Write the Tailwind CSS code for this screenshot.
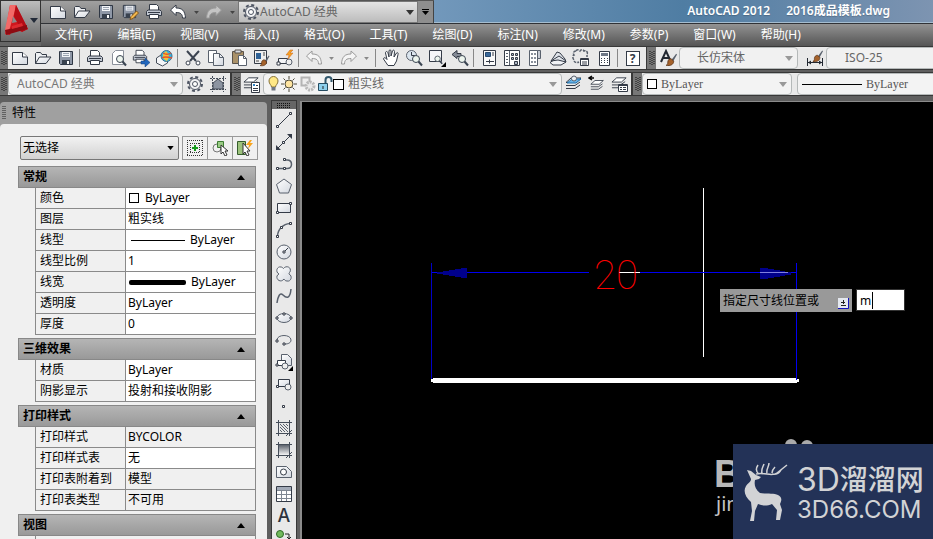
<!DOCTYPE html>
<html lang="zh-CN">
<head>
    <meta charset="UTF-8">
    <meta name="viewport" content="width=device-width, initial-scale=1.0">
    <title>AutoCAD 2012 - 2016成品模板.dwg</title>
    <script src="https://cdn.jsdelivr.net/npm/@tailwindcss/browser@4"></script>
</head>
<body class="h-screen overflow-hidden flex flex-col bg-[#5f5f5f] text-xs leading-4 text-black font-['Noto_Sans','Noto_Sans_CJK_SC',sans-serif]">

    <!-- Shared icons -->
    <svg class="absolute size-0">
        <defs>
            <linearGradient id="paper" x1="0" y1="0" x2="1" y2="1">
                <stop offset="0" stop-color="#fff"/><stop offset="1" stop-color="#d3d8e0"/>
            </linearGradient>
            <linearGradient id="shade" x1="0" y1="0" x2="0" y2="1">
                <stop offset="0" stop-color="#5d636d"/><stop offset="1" stop-color="#f4f4f4"/>
            </linearGradient>
        </defs>
        <symbol id="i-new" viewBox="0 0 18 18"><path d="M1.500 3.500h10l5 4.500v7.500h-15z" fill="url(#paper)" stroke="#343b47"/><path d="M11.500 3.500V8h5" fill="#fff" stroke="#343b47"/></symbol>
        <symbol id="i-open" viewBox="0 0 18 18"><path d="M1.500 14.500v-10l1-1h4l1.500 2h4.500v2.500" fill="#eef0f3" stroke="#343b47"/><path d="M1.500 14.500l4-6.500h11.500l-5 6.500z" fill="url(#paper)" stroke="#343b47"/></symbol>
        <symbol id="i-save" viewBox="0 0 18 18"><path d="M2.500 2.500h13v13h-12l-1-1z" fill="#8f98a7" stroke="#2f3744"/><path d="M5 3h8v5H5z" fill="#f3f5f8"/><path d="M6 4.500h6M6 6.500h6" stroke="#9aa3b0"/><path d="M5 11h8v4.500H5z" fill="#39424f"/><path d="M10 12h2v3h-2z" fill="#fff"/></symbol>
        <symbol id="i-print" viewBox="0 0 18 18"><path d="M4.500 7.500v-6h7l2 2v4" fill="#fff" stroke="#343b47"/><path d="M1.500 12.500v-4l1.500-1.500h12l1.500 1.500v4z" fill="#c3c9d3" stroke="#343b47"/><path d="M4.500 11.500h9v4h-9z" fill="#fff" stroke="#343b47"/><path d="M3 9.500h12" stroke="#343b47"/></symbol>
        <symbol id="i-undo" viewBox="0 0 18 18"><path d="M1.500 7l5.500-5v3c6 0 9 2.500 9.500 10h-3c0-4-2-5.500-6.500-5.500v3z" fill="currentColor" stroke="#343b47"/></symbol>
        <symbol id="i-undo-off" viewBox="0 0 18 18"><path d="M1.500 7l5.500-5v3c6 0 9 2.500 9.500 10h-3c0-4-2-5.500-6.500-5.500v3z" fill="#f5f5f5" stroke="#9a9a9a"/></symbol>
        <symbol id="i-redo-off" viewBox="0 0 18 18"><path d="M16.500 7L11 2v3c-6 0-9 2.500-9.500 10h3c0-4 2-5.500 6.500-5.500v3z" fill="currentColor" stroke="#9a9a9a"/></symbol>
        <symbol id="i-gear" viewBox="0 0 18 18"><circle cx="9" cy="9" r="7" fill="none" stroke="#4e5563" stroke-width="2" stroke-dasharray="3 2.500"/><circle cx="9" cy="9" r="5.500" fill="#f1f2f4" stroke="#4e5563"/><circle cx="9" cy="9" r="2.500" fill="#fff" stroke="#4e5563"/></symbol>
        <symbol id="i-lens" viewBox="0 0 18 18"><circle cx="11" cy="10" r="3.500" fill="#edf5ee" stroke="#3b4552"/><path d="M13.500 12.500L17 16.500" stroke="#3b4552" stroke-width="2"/></symbol>
        <symbol id="i-layers" viewBox="0 0 18 18"><path d="M1 13.500h9l5-3.500M1 10.500h9l5-3.500" fill="none" stroke="#343b47"/><path d="M1 7.500L6 3h10l-5 4.500z" fill="#fff" stroke="#343b47"/></symbol>
        <symbol id="i-brush" viewBox="0 0 18 18"><path d="M17 2l-6 8 2 2 5-9z" fill="#59616d"/><path d="M11 8l3 3c0 4-4 6-9 5 2-1 2-2 2-4s1.500-4 4-4z" fill="#a5622b" stroke="#5e3518"/></symbol>
        <symbol id="i-grip" viewBox="0 0 6 16"><path d="M1 1v14M3 2v14M5 1v14" stroke="#111" stroke-dasharray="1 1"/></symbol>
        <symbol id="i-down" viewBox="0 0 8 5"><path d="M0 0h8L4 5z" fill="currentColor"/></symbol>
        <symbol id="i-up" viewBox="0 0 8 5"><path d="M0 5h8L4 0z" fill="#000"/></symbol>
    </svg>

    <header class="flex shrink-0 h-[46px] bg-[#666]">
        <button aria-label="应用程序菜单" class="w-[41px] h-[42px] shrink-0 border border-[#333] bg-linear-to-b from-[#bdbdbd] to-[#6b6b6b]">
            <svg class="w-[39px] h-10" viewBox="0 0 39 40">
                <path d="M9 4h6l12 24-7 3-3-5-6 2-2 6-5-1z" fill="#d0161d"/>
                <path d="M9 4h6l-2 9-5 17-3 4-1-5z" fill="#f26a68"/>
                <path d="M15 4l12 24-6 3-8-16z" fill="#b30d16"/>
                <path d="M12 15l4 6-5 1z" fill="#8a8a8a"/>
                <path d="M4 29l22-5v4L5 34z" fill="#8e0b12"/>
                <path d="M11 25l10-3 1 3-11 3z" fill="#dd2a2f"/>
                <path d="M29 17h8l-4 5z" fill="#222a38"/>
            </svg>
        </button>
        <div class="flex-1 min-w-0 flex flex-col">
            <div class="h-6 flex border-b border-[#303236]">
                <div class="flex items-center pl-[5px] bg-linear-to-b from-[#a0a0a0] to-[#7b7b7b] text-white border-t border-[#555]">
                    <button aria-label="新建" class="w-6 flex justify-center"><svg class="size-[18px]"><use href="#i-new"/></svg></button>
                    <button aria-label="打开" class="w-6 flex justify-center"><svg class="size-[18px]"><use href="#i-open"/></svg></button>
                    <button aria-label="保存" class="w-6 flex justify-center"><svg class="size-[18px]"><use href="#i-save"/></svg></button>
                    <button aria-label="另存为" class="w-6 flex justify-center"><svg class="size-[18px]" viewBox="0 0 18 18"><use href="#i-save" width="17" height="17"/><path d="M9 16.500l1-3 5.500-5.500 2 2-5.500 5.500z" fill="#f3b84d" stroke="#82551a"/></svg></button>
                    <button aria-label="打印" class="w-6 flex justify-center"><svg class="size-[18px]"><use href="#i-print"/></svg></button>
                    <button aria-label="放弃" class="w-6 flex justify-center"><svg class="size-[18px]"><use href="#i-undo"/></svg></button>
                    <button aria-label="放弃列表" class="w-3 flex justify-center text-[#444]"><svg class="w-[5px] h-[3px]"><use href="#i-down"/></svg></button>
                    <button aria-label="重做" class="w-6 flex justify-center text-[#c4c4c4]"><svg class="size-[18px]"><use href="#i-redo-off"/></svg></button>
                    <button aria-label="重做列表" class="w-3 flex justify-center text-[#444]"><svg class="w-[5px] h-[3px]"><use href="#i-down"/></svg></button>
                    <div class="w-[180px] h-[22px] flex items-center px-[3px] border border-[#777] bg-linear-to-b from-[#e4e4e4] to-[#bcbcbc]">
                        <svg class="size-[18px] shrink-0"><use href="#i-gear"/></svg>
                        <select aria-label="工作空间" class="appearance-none flex-1 min-w-0 text-xs leading-5 text-[#666]"><option>AutoCAD 经典</option></select>
                        <svg class="w-2 h-[5px] text-[#333]"><use href="#i-down"/></svg>
                    </div>
                    <button aria-label="自定义快速访问工具栏" class="w-4 h-[22px] flex items-center justify-center border-r border-[#444] bg-[#8e8e8e]">
                        <svg class="w-[7px] h-[7px]" viewBox="0 0 7 7"><path d="M0 0h7v1H0zM0 2h7L3.500 6z" fill="#000"/></svg>
                    </button>
                </div>
                <div class="flex-1 flex items-center justify-end gap-4 pr-[43px] text-white font-semibold bg-linear-to-r from-[#7298bb] via-[#4f7da3] to-[#7d94b1] border-b border-[#a5bdd0]">
                    <span class="text-shadow-xs">AutoCAD 2012</span>
                    <h1 class="text-shadow-xs">2016成品模板.dwg</h1>
                </div>
            </div>
            <nav class="flex-1 flex items-center gap-[25px] pl-[14px] whitespace-nowrap text-white bg-linear-to-b from-[#939393] to-[#555]">
                <a href="#">文件(F)</a>
                <a href="#">编辑(E)</a>
                <a href="#">视图(V)</a>
                <a href="#">插入(I)</a>
                <a href="#">格式(O)</a>
                <a href="#">工具(T)</a>
                <a href="#">绘图(D)</a>
                <a href="#">标注(N)</a>
                <a href="#">修改(M)</a>
                <a href="#">参数(P)</a>
                <a href="#">窗口(W)</a>
                <a href="#">帮助(H)</a>
            </nav>
        </div>
    </header>

    <!-- Standard and styles toolbars -->
    <div class="flex shrink-0 h-6 border-y border-[#383838] bg-[#e9e9e9] overflow-hidden">
        <div class="flex items-center shrink-0">
            <div class="w-2 h-full flex items-center justify-center bg-[#777]"><svg class="w-[6px] h-4"><use href="#i-grip"/></svg></div>
            <button aria-label="新建" class="w-[23px] flex justify-center"><svg class="size-[18px]"><use href="#i-new"/></svg></button>
            <button aria-label="打开" class="w-[23px] flex justify-center"><svg class="size-[18px]"><use href="#i-open"/></svg></button>
            <button aria-label="保存" class="w-[23px] flex justify-center"><svg class="size-[18px]"><use href="#i-save"/></svg></button>
            <i class="w-px h-[18px] ml-[2px] mr-[3px] bg-[#888]"></i>
            <button aria-label="打印" class="w-[23px] flex justify-center"><svg class="size-[18px]"><use href="#i-print"/></svg></button>
            <button aria-label="打印预览" class="w-[23px] flex justify-center"><svg class="size-[18px]" viewBox="0 0 18 18"><path d="M3.500 15.500v-11l3-3h8v14z" fill="#fff" stroke="#8b919b"/><use href="#i-lens" width="18" height="18"/></svg></button>
            <button aria-label="发布" class="w-[23px] flex justify-center"><svg class="size-[18px]" viewBox="0 0 18 18"><use href="#i-print" width="16" height="16"/><path d="M9 12h4V9l5 4.500-5 4.500v-3H9z" fill="#2267bd" stroke="#123e78" stroke-width=".5"/></svg></button>
            <button aria-label="三维打印" class="w-[23px] flex justify-center"><svg class="size-[18px]" viewBox="0 0 18 18"><path d="M1.500 9l6-4 5 4v5l-5 3-6-3z" fill="#f4f5f7" stroke="#454d59"/><circle cx="11.500" cy="7" r="5.500" fill="#34b6e4" stroke="#3a718f"/><path d="M11 2c-6 5-2 9 1 10 3-4 2-7-1-10z" fill="#f4c236"/><path d="M7 9c3-2 6-1 10 0M8 4c3 2 5 2 8 0" fill="none" stroke="#e3502f" stroke-width="1.500"/></svg></button>
            <i class="w-px h-[18px] ml-[2px] mr-[3px] bg-[#888]"></i>
            <button aria-label="剪切" class="w-[23px] flex justify-center"><svg class="size-[18px]" viewBox="0 0 18 18"><path d="M3 2l9 10M15 2L6 12" stroke="#3b4350" stroke-width="2"/><circle cx="4" cy="14" r="2" fill="#fff" stroke="#3b4350"/><circle cx="14" cy="14" r="2" fill="#fff" stroke="#3b4350"/></svg></button>
            <button aria-label="复制" class="w-[23px] flex justify-center"><svg class="size-[18px]" viewBox="0 0 18 18"><path d="M1.500 1.500h8v12h-8z" fill="#fff" stroke="#59616d"/><path d="M6.500 4.500h6l4 4v8h-10z" fill="url(#paper)" stroke="#59616d"/><path d="M12.500 4.500v4h4" fill="none" stroke="#59616d"/></svg></button>
            <button aria-label="粘贴" class="w-[23px] flex justify-center"><svg class="size-[18px]" viewBox="0 0 18 18"><path d="M2.500 2.500h11v12h-11z" fill="#aa9168" stroke="#595149"/><path d="M5 1h6v3H5z" fill="#d8dbe0" stroke="#595149"/><path d="M8.500 6.500h5l3 3v7h-8z" fill="#fff" stroke="#59616d"/><path d="M13.500 6.500v3h3" fill="none" stroke="#59616d"/></svg></button>
            <button aria-label="特性匹配" class="w-[23px] flex justify-center"><svg class="size-[18px]" viewBox="0 0 18 18"><path d="M1.500 1.500h12v13h-12z" fill="#eee" stroke="#343b47"/><path d="M3 4h5v6H3z" fill="#2e6196"/><path d="M10 4h2M10 6h2M3 12h3" stroke="#444"/><use href="#i-brush" x="3" y="5" width="14" height="13"/></svg></button>
            <button aria-label="块编辑器" class="w-[23px] flex justify-center"><svg class="size-[18px]" viewBox="0 0 18 18"><path d="M2.500 9.500h9v5h-9z" fill="#f4f5f7" stroke="#343b47"/><path d="M1 13h3v3H1z" fill="#fff" stroke="#343b47"/><circle cx="13" cy="13" r="3" fill="#eee" stroke="#59616d"/><path d="M14 1l-4 5h3l-1 4 5-6h-3l3-3z" fill="#f7a022" stroke="#c8641a" stroke-width=".5"/></svg></button>
            <i class="w-px h-[18px] ml-[2px] mr-[3px] bg-[#888]"></i>
            <button aria-label="放弃" class="w-[23px] flex justify-center"><svg class="size-[18px]"><use href="#i-undo-off"/></svg></button>
            <button aria-label="放弃列表" class="w-3 flex justify-center text-[#888]"><svg class="w-[5px] h-[3px]"><use href="#i-down"/></svg></button>
            <button aria-label="重做" class="w-[23px] flex justify-center text-[#f5f5f5]"><svg class="size-[18px]"><use href="#i-redo-off"/></svg></button>
            <button aria-label="重做列表" class="w-3 flex justify-center text-[#888]"><svg class="w-[5px] h-[3px]"><use href="#i-down"/></svg></button>
            <i class="w-px h-[18px] mx-[3px] bg-[#888]"></i>
            <button aria-label="平移" class="w-[23px] flex justify-center"><svg class="size-[18px]" viewBox="0 0 18 18"><path d="M6 16.500L1.500 10c0-2 2-1.500 3.500.5L3.500 4c0-2 2-2 2.500 0L7 8V2c0-1.500 2-1.500 2 0v5l1.500-5c.5-1.500 2-1 2 .5L12 8l2.500-4c1-1 2 0 1.500 1.500L14.500 12 12 16.500z" fill="#fff" stroke="#343b47"/></svg></button>
            <button aria-label="实时缩放" class="w-[23px] flex justify-center"><svg class="size-[18px]" viewBox="0 0 18 18"><circle cx="6.500" cy="6.500" r="5" fill="#dbe5ee" stroke="#59616d"/><path d="M6.500 3v3.500H10" fill="none" stroke="#343b47"/><use href="#i-lens" width="18" height="18"/></svg></button>
            <button aria-label="窗口缩放" class="w-[23px] flex justify-center"><svg class="size-[18px]" viewBox="0 0 18 18"><path d="M1.500 1.500h12v11h-12z" fill="#f4f5f7" stroke="#343b47"/><use href="#i-lens" x="1" y="2" width="14" height="14"/><path d="M18 13v5h-5z" fill="#000"/></svg></button>
            <button aria-label="缩放上一个" class="w-[23px] flex justify-center"><svg class="size-[18px]" viewBox="0 0 18 18"><path d="M1 5.500l5-4v3h4v3H6v2z" fill="#858b96" stroke="#343b47"/><use href="#i-lens" width="18" height="18"/></svg></button>
            <i class="w-px h-[18px] ml-[2px] mr-[3px] bg-[#888]"></i>
            <button aria-label="特性" class="w-[23px] flex justify-center"><svg class="size-[18px]" viewBox="0 0 18 18"><path d="M3.500 1.500h12v15h-12z" fill="#fafafa" stroke="#343b47"/><path d="M5.500 3.500h5v4h-5z" fill="#3a689a" stroke="#27496f"/><path d="M12 4h2M12 6h2M6 12.500h8M9.500 10.500v4" stroke="#343b47"/></svg></button>
            <button aria-label="设计中心" class="w-[23px] flex justify-center"><svg class="size-[18px]" viewBox="0 0 18 18"><path d="M1.500 1.500h15v15h-15z" fill="#fff" stroke="#343b47"/><path d="M6.500 2v14M3 4.500h2M3 7.500h2M3 10.500h2M3 13.500h2" stroke="#59616d"/><path d="M8.500 4.500h2v2h-2zM12.500 4.500h2v2h-2zM8.500 8.500h2v2h-2zM12.500 8.500h2v2h-2zM11.500 12.500h3v3h-3z" fill="#aeb7c5" stroke="#343b47"/></svg></button>
            <button aria-label="工具选项板" class="w-[23px] flex justify-center"><svg class="size-[18px]" viewBox="0 0 18 18"><path d="M3.500 1.500h8v15h-8z" fill="#fff" stroke="#59616d"/><path d="M11.500 1.500h3v8h-3z" fill="#c5cad3" stroke="#59616d"/><path d="M5 5h2M8 5h2M5 9h2M8 9h2M5 13h2M8 13h2" stroke="#8a919c" stroke-width="2"/></svg></button>
            <button aria-label="图纸集管理器" class="w-[23px] flex justify-center"><svg class="size-[18px]" viewBox="0 0 18 18"><path d="M1 13.500L8 9l9 4-5 3H4z" fill="#f0f2f5" stroke="#343b47"/><path d="M8 3l3 1 5 6 1 3-8-2-7 1z" fill="#dfe3e9" stroke="#343b47"/><path d="M2 12l8-5 7 5" fill="none" stroke="#343b47"/></svg></button>
            <button aria-label="标记集管理器" class="w-[23px] flex justify-center"><svg class="size-[18px]" viewBox="0 0 18 18"><path d="M4 2c1-2 3-1 4 0 1-2 4-1 4 0 3-1 4 2 3 3v3M4 2C1 2 1 5 2 6c-2 1-1 4 0 5 0 3 3 3 5 2" fill="none" stroke="#59616d" stroke-width="1.500" stroke-dasharray="3 1"/><path d="M8.500 9.500h8v7h-8z" fill="#fff" stroke="#343b47"/><path d="M8 10.500h9M10 13h5M10 15h5" stroke="#343b47"/></svg></button>
            <button aria-label="快速计算器" class="w-[23px] flex justify-center"><svg class="size-[18px]" viewBox="0 0 18 18"><path d="M4.500 2.500h10v14h-10z" fill="#fff" stroke="#343b47"/><path d="M6 4h7v3H6z" fill="#6f7886"/><path d="M6 9.500h7M6 11.500h7M6 13.500h7" stroke="#343b47" stroke-dasharray="1 2"/></svg></button>
            <i class="w-px h-[18px] ml-[2px] mr-[3px] bg-[#888]"></i>
            <button aria-label="帮助" class="w-[23px] flex justify-center"><span class="w-[14px] h-[15px] leading-[13px] border border-[#343b47] bg-white font-bold text-[#343b47]">?</span></button>
        </div>
        <div class="flex items-center flex-1 min-w-0 ml-[2px] border-l border-[#383838]">
            <div class="w-[9px] h-full shrink-0 flex items-center justify-center bg-[#777]"><svg class="w-[6px] h-4"><use href="#i-grip"/></svg></div>
            <button aria-label="文字样式" class="w-[23px] shrink-0 flex justify-center"><svg class="size-[18px]" viewBox="0 0 18 18"><path d="M2 13L7 2l5 11M4 9h6" fill="none" stroke="#222831" stroke-width="2"/><use href="#i-brush" x="3" y="3" width="15" height="15"/></svg></button>
            <div class="w-[119px] h-[22px] shrink-0 flex items-center pl-[17px] pr-1 border border-[#b5b9b9] rounded-sm bg-[#f1f1f1]">
                <select aria-label="文字样式名" class="appearance-none flex-1 min-w-0 text-[#666]"><option>长仿宋体</option></select>
                <svg class="w-2 h-[5px] text-[#999]"><use href="#i-down"/></svg>
            </div>
            <i class="w-px h-[18px] ml-[2px] mr-[3px] bg-[#888]"></i>
            <button aria-label="标注样式" class="w-[23px] shrink-0 flex justify-center"><svg class="size-[18px]" viewBox="0 0 18 18"><path d="M1.500 9v8M16.500 9v8M2 13.500h14" stroke="#222831"/><path d="M2 13.500l3-2v4zM16 13.500l-3-2v4z" fill="#222831"/><use href="#i-brush" x="3" y="0" width="14" height="14"/></svg></button>
            <div class="w-[180px] h-[22px] shrink-0 flex items-center pl-[18px] pr-1 border border-[#b5b9b9] rounded-sm bg-[#f1f1f1]">
                <select aria-label="标注样式名" class="appearance-none flex-1 min-w-0 text-[#666]"><option>ISO-25</option></select>
                <svg class="w-2 h-[5px] text-[#999]"><use href="#i-down"/></svg>
            </div>
        </div>
    </div>

    <!-- Workspace, layer and property toolbars -->
    <div class="flex shrink-0 h-6 mt-[2px] border-y border-[#383838] bg-[#e9e9e9] overflow-hidden">
        <div class="flex items-center shrink-0">
            <div class="w-2 h-full flex items-center justify-center bg-[#777]"><svg class="w-[6px] h-4"><use href="#i-grip"/></svg></div>
            <div class="w-[175px] h-[22px] flex items-center pl-2 pr-1 border border-[#b5b9b9] rounded-sm bg-[#f3f3f3]">
                <select aria-label="工作空间" class="appearance-none flex-1 min-w-0 text-[#777]"><option>AutoCAD 经典</option></select>
                <svg class="w-2 h-[5px] text-[#999]"><use href="#i-down"/></svg>
            </div>
            <button aria-label="工作空间设置" class="w-[23px] flex justify-center"><svg class="size-[18px]"><use href="#i-gear"/></svg></button>
            <button aria-label="我的工作空间" class="w-[23px] flex justify-center"><svg class="size-[18px]" viewBox="0 0 18 18"><path d="M1 3.500h16M1 14.500h16M3.500 1v16M14.500 1v16" stroke="#454d59" stroke-dasharray="2 1"/><path d="M4 14V8l5-4 5 4v6z" fill="#8c94a1" stroke="#454d59"/></svg></button>
        </div>
        <div class="flex items-center shrink-0 ml-px border-l-2 border-[#383838]">
            <div class="w-[9px] h-full flex items-center justify-center bg-[#777]"><svg class="w-[6px] h-4"><use href="#i-grip"/></svg></div>
            <button aria-label="图层特性管理器" class="w-[22px] flex justify-center"><svg class="size-[18px]" viewBox="0 0 18 18"><use href="#i-layers" width="17" height="17"/><path d="M8.500 7.500h8v10h-8z" fill="#fff" stroke="#343b47"/><path d="M10 9h2v2h-2z" fill="#2d83c5"/><path d="M13 10.500h2M10 13.500h5M10 15.500h5" stroke="#343b47"/></svg></button>
            <div class="w-[299px] h-[22px] flex items-center pl-[3px] pr-1 border border-[#b5b9b9] rounded-sm bg-[#f3f3f3]">
                <svg class="w-[66px] h-[18px] shrink-0" viewBox="0 0 66 18">
                    <path d="M4.500 12c0-2-2.500-3-2.500-6a4.500 4.500 0 0 1 9 0c0 3-2.500 4-2.500 6z" fill="#ffe886" stroke="#857138"/><path d="M4.500 12h4v3.500h-4z" fill="#707783"/>
                    <circle cx="22" cy="9" r="4" fill="#ffe5a1" stroke="#4d4939"/><path d="M22 1v3M22 14v3M14 9h3M27 9h3M16.500 3.500l2 2M25.500 12.500l2 2M27.500 3.500l-2 2M18.500 12.500l-2 2" stroke="#4d4939"/>
                    <path d="M34.500 2.500h8v8h-8z" fill="#eee" stroke="#b4b4b4" stroke-width="2"/><circle cx="43" cy="11" r="4" fill="#e9e9e9" stroke="#b8b8b8" stroke-width="3" stroke-dasharray="2 1"/>
                    <path d="M51.500 8.500h9v7h-9z" fill="#8ed0ed" stroke="#254c61"/><path d="M58.500 8V5c0-4 6-4 6 0v2" fill="none" stroke="#31586d" stroke-width="2"/><path d="M56 11v3" stroke="#222"/>
                </svg>
                <span class="w-[11px] h-[11px] shrink-0 mr-1 border border-black bg-white"></span>
                <select aria-label="图层" class="appearance-none flex-1 min-w-0 text-[#666]"><option>粗实线</option></select>
                <svg class="w-2 h-[5px] text-[#999]"><use href="#i-down"/></svg>
            </div>
            <button aria-label="置为当前图层" class="w-[23px] flex justify-center"><svg class="size-[18px]" viewBox="0 0 18 18"><use href="#i-layers" width="18" height="18"/><path d="M2 8l5-4h9l-5 4z" fill="#68b4e8" stroke="#2271aa"/><circle cx="9" cy="3.500" r="2.500" fill="#e8eef2" stroke="#59616d"/></svg></button>
            <button aria-label="上一个图层" class="w-[23px] flex justify-center"><svg class="size-[18px]" viewBox="0 0 18 18"><use href="#i-layers" x="2" y="3" width="15" height="15"/><path d="M1 3h5M4 1L1 3l3 2" fill="none" stroke="#000" stroke-width="1.500"/></svg></button>
            <button aria-label="图层状态管理器" class="w-[23px] flex justify-center"><svg class="size-[18px]" viewBox="0 0 18 18"><use href="#i-layers" width="17" height="17"/><path d="M7.500 9.500h9v7h-9z" fill="#fff" stroke="#343b47"/><path d="M8 10.500h8M9 12.500h2M12 12.500h3M9 14.500h2M12 14.500h3" stroke="#343b47"/></svg></button>
        </div>
        <div class="flex items-center flex-1 min-w-0 border-l-2 border-[#383838]">
            <div class="w-[9px] h-full shrink-0 flex items-center justify-center bg-[#777]"><svg class="w-[6px] h-4"><use href="#i-grip"/></svg></div>
            <div class="w-[150px] h-[22px] shrink-0 flex items-center gap-1 pl-1 pr-1 border border-[#b5b9b9] rounded-sm bg-[#f3f3f3]">
                <span class="w-[10px] h-[10px] shrink-0 border border-black bg-white"></span>
                <select aria-label="颜色控制" class="appearance-none flex-1 min-w-0 text-[#555] font-['Liberation_Serif',serif]"><option>ByLayer</option></select>
                <svg class="w-2 h-[5px] text-[#999]"><use href="#i-down"/></svg>
            </div>
            <i class="w-px h-[18px] ml-[2px] mr-[3px] bg-[#888]"></i>
            <div class="w-[200px] h-[22px] shrink-0 flex items-center gap-1 px-1 border border-[#b5b9b9] rounded-sm bg-[#f3f3f3]">
                <span class="w-[60px] h-px shrink-0 bg-black"></span>
                <select aria-label="线型控制" class="appearance-none flex-1 min-w-0 text-[#555] font-['Liberation_Serif',serif]"><option>ByLayer</option></select>
                <svg class="w-2 h-[5px] text-[#999]"><use href="#i-down"/></svg>
            </div>
        </div>
    </div>

    <main class="flex flex-1 min-h-0 pt-1">
        <!-- Properties palette -->
        <aside class="w-[267px] shrink-0 mt-[2px] flex flex-col rounded-t bg-[#a0a0a0] overflow-hidden">
            <div class="h-[22px] shrink-0 flex items-center gap-[6px] pl-[2px]">
                <svg class="w-[4px] h-[14px]" viewBox="0 0 4 14"><path d="M1 0v14M3 0v14" stroke="#222" stroke-dasharray="1 1"/></svg>
                <h2>特性</h2>
            </div>
            <div class="flex-1 min-h-0 rounded-t pt-3 pl-[18px] pr-[11px] bg-[#f0f0f0] overflow-hidden">
                <div class="flex gap-[3px] pl-[2px] mb-[6px] -mr-[2px]">
                    <div class="flex-1 min-w-0 h-6 flex items-center pl-[2px] pr-1 border border-[#777] rounded-xs bg-linear-to-b from-[#f2f2f2] to-[#d2d2d2]">
                        <select aria-label="选择对象类型" class="appearance-none flex-1 min-w-0"><option>无选择</option></select>
                        <svg class="w-[7px] h-1 text-black"><use href="#i-down"/></svg>
                    </div>
                    <div class="flex h-6 border border-[#999] divide-x divide-[#999]">
                        <button aria-label="切换 PICKADD" class="w-[25px] flex items-center justify-center"><svg class="size-4" viewBox="0 0 16 16"><path d="M0 .5h16M0 15.500h16M.5 0v16M15.500 0v16M3 3.500h10M3 12.500h10M3.500 3v10M12.500 3v10" stroke="#333" stroke-dasharray="1 1"/><path d="M5 8h6M8 5v6" stroke="#169b1c" stroke-width="2"/></svg></button>
                        <button aria-label="选择对象" class="w-[25px] flex items-center justify-center"><svg class="size-4" viewBox="0 0 16 16"><circle cx="5" cy="8" r="4" fill="none" stroke="#777"/><path d="M5.500 1.500h6v6h-6z" fill="#9acb85" stroke="#3d7c32"/><path d="M9 5v9l2-2 2 4 2-1-2-4h3z" fill="#fff" stroke="#333"/></svg></button>
                        <button aria-label="快速选择" class="w-6 flex items-center justify-center"><svg class="size-4" viewBox="0 0 16 16"><path d="M.5 1.500h8v13h-8z" fill="#9cc27c" stroke="#355c2c"/><path d="M6 3v11l2-2 2 4 2-1-2-4h3z" fill="#fff" stroke="#333"/><path d="M13 0l-4 5h3l-1 4 5-6h-3l2-3z" fill="#f9a51e"/></svg></button>
                    </div>
                </div>

                <section class="mb-[3px]">
                    <h3 class="h-[22px] flex items-center justify-between pl-1 pr-[10px] border border-[#888] bg-linear-to-b from-[#b5b5b5] to-[#999] font-bold">常规<svg class="w-2 h-[5px]"><use href="#i-up"/></svg></h3>
                    <table class="ml-[17px] w-[221px] table-fixed border-separate border-spacing-0 border-r border-[#8a8a8a]">
                        <tr class="h-[21px]"><th class="w-[90px] p-0 pl-1 text-left font-normal border-l border-b border-[#8a8a8a]">颜色</th><td class="p-0 pl-[3px] bg-white border-l border-b border-[#8a8a8a]"><div class="flex items-center gap-[6px]"><span class="size-[10px] border border-black"></span>ByLayer</div></td></tr>
                        <tr class="h-[21px]"><th class="p-0 pl-1 text-left font-normal border-l border-b border-[#8a8a8a]">图层</th><td class="p-0 pl-[2px] bg-white border-l border-b border-[#8a8a8a]">粗实线</td></tr>
                        <tr class="h-[21px]"><th class="p-0 pl-1 text-left font-normal border-l border-b border-[#8a8a8a]">线型</th><td class="p-0 pl-[5px] bg-white border-l border-b border-[#8a8a8a]"><div class="flex items-center gap-[5px]"><span class="w-[54px] h-px bg-black"></span>ByLayer</div></td></tr>
                        <tr class="h-[21px]"><th class="p-0 pl-1 text-left font-normal border-l border-b border-[#8a8a8a]"><label for="ltscale">线型比例</label></th><td class="p-0 pl-[2px] bg-white border-l border-b border-[#8a8a8a]"><input id="ltscale" type="text" value="1" class="block w-full h-4"></td></tr>
                        <tr class="h-[21px]"><th class="p-0 pl-1 text-left font-normal border-l border-b border-[#8a8a8a]">线宽</th><td class="p-0 pl-[3px] bg-white border-l border-b border-[#8a8a8a]"><div class="flex items-center gap-[5px]"><span class="w-[57px] h-[5px] rounded-xs bg-black"></span>ByLayer</div></td></tr>
                        <tr class="h-[21px]"><th class="p-0 pl-1 text-left font-normal border-l border-b border-[#8a8a8a]"><label for="transparency">透明度</label></th><td class="p-0 pl-[2px] bg-white border-l border-b border-[#8a8a8a]"><input id="transparency" type="text" value="ByLayer" class="block w-full h-4"></td></tr>
                        <tr class="h-[21px]"><th class="p-0 pl-1 text-left font-normal border-l border-b border-[#8a8a8a]"><label for="thickness">厚度</label></th><td class="p-0 pl-[2px] bg-white border-l border-b border-[#8a8a8a]"><input id="thickness" type="text" value="0" class="block w-full h-4"></td></tr>
                    </table>
                </section>

                <section class="mb-[3px]">
                    <h3 class="h-[22px] flex items-center justify-between pl-1 pr-[10px] border border-[#888] bg-linear-to-b from-[#b5b5b5] to-[#999] font-bold">三维效果<svg class="w-2 h-[5px]"><use href="#i-up"/></svg></h3>
                    <table class="ml-[17px] w-[221px] table-fixed border-separate border-spacing-0 border-r border-[#8a8a8a]">
                        <tr class="h-[21px]"><th class="w-[90px] p-0 pl-1 text-left font-normal border-l border-b border-[#8a8a8a]">材质</th><td class="p-0 pl-[2px] bg-white border-l border-b border-[#8a8a8a]">ByLayer</td></tr>
                        <tr class="h-[21px]"><th class="p-0 pl-1 text-left font-normal border-l border-b border-[#8a8a8a]">阴影显示</th><td class="p-0 pl-[2px] bg-white border-l border-b border-[#8a8a8a]">投射和接收阴影</td></tr>
                    </table>
                </section>

                <section class="mb-[3px]">
                    <h3 class="h-[22px] flex items-center justify-between pl-1 pr-[10px] border border-[#888] bg-linear-to-b from-[#b5b5b5] to-[#999] font-bold">打印样式<svg class="w-2 h-[5px]"><use href="#i-up"/></svg></h3>
                    <table class="ml-[17px] w-[221px] table-fixed border-separate border-spacing-0 border-r border-[#8a8a8a]">
                        <tr class="h-[21px]"><th class="w-[90px] p-0 pl-1 text-left font-normal border-l border-b border-[#8a8a8a]">打印样式</th><td class="p-0 pl-[2px] border-l border-b border-[#8a8a8a]">BYCOLOR</td></tr>
                        <tr class="h-[21px]"><th class="p-0 pl-1 text-left font-normal border-l border-b border-[#8a8a8a]">打印样式表</th><td class="p-0 pl-[2px] bg-white border-l border-b border-[#8a8a8a]">无</td></tr>
                        <tr class="h-[21px]"><th class="p-0 pl-1 text-left font-normal border-l border-b border-[#8a8a8a]">打印表附着到</th><td class="p-0 pl-[2px] border-l border-b border-[#8a8a8a]">模型</td></tr>
                        <tr class="h-[21px]"><th class="p-0 pl-1 text-left font-normal border-l border-b border-[#8a8a8a]">打印表类型</th><td class="p-0 pl-[2px] border-l border-b border-[#8a8a8a]">不可用</td></tr>
                    </table>
                </section>

                <section>
                    <h3 class="h-[22px] flex items-center justify-between pl-1 pr-[10px] border border-[#888] bg-linear-to-b from-[#b5b5b5] to-[#999] font-bold">视图<svg class="w-2 h-[5px]"><use href="#i-up"/></svg></h3>
                    <div class="ml-[17px] h-5 border-x border-[#8a8a8a]"></div>
                </section>
            </div>
        </aside>

        <!-- Draw toolbar -->
        <div class="w-[26px] shrink-0 ml-1 flex flex-col items-center border-x border-t border-[#383838] bg-[#e9e9e9] overflow-hidden">
            <div class="w-full h-2 shrink-0 flex items-center justify-center bg-[#666]"><svg class="w-4 h-[5px]" viewBox="0 0 16 5"><path d="M1 .5h14M1 2.500h14M1 4.500h14" stroke="#111" stroke-dasharray="1 1"/></svg></div>
            <button aria-label="直线" class="h-[22px] shrink-0"><svg class="size-[18px]" viewBox="0 0 18 18"><path d="M3 15L15 3" stroke="#343b47"/><path d="M1.500 14.500h2v2h-2zM14.500 1.500h2v2h-2z" fill="#fff" stroke="#343b47"/></svg></button>
            <button aria-label="构造线" class="h-[22px] shrink-0"><svg class="size-[18px]" viewBox="0 0 18 18"><path d="M3 15L15 3" stroke="#343b47"/><path d="M1 17v-5l5 5zM17 1v5l-5-5z" fill="#343b47"/><path d="M7.500 8.500h2v2h-2z" fill="#fff" stroke="#343b47"/></svg></button>
            <button aria-label="多段线" class="h-[22px] shrink-0"><svg class="size-[18px]" viewBox="0 0 18 18"><path d="M3 13.500h9c6 0 6-8.500 0-8.500h-2" fill="none" stroke="#59616d" stroke-width="1.500"/><path d="M1.500 12.500h2v2h-2zM8.500 12.500h2v2h-2zM8.500 3.500h2v2h-2z" fill="#fff" stroke="#343b47"/></svg></button>
            <button aria-label="正多边形" class="h-[22px] shrink-0"><svg class="size-[18px]" viewBox="0 0 18 18"><path d="M9 2l7.500 5.500-3 8.500h-9l-3-8.500z" fill="url(#paper)" stroke="#59616d"/></svg></button>
            <button aria-label="矩形" class="h-[22px] shrink-0"><svg class="size-[18px]" viewBox="0 0 18 18"><path d="M2.500 4.500h13v9h-13z" fill="url(#paper)" stroke="#343b47"/><path d="M1.500 12.500h2v2h-2zM14.500 3.500h2v2h-2z" fill="#fff" stroke="#343b47"/></svg></button>
            <button aria-label="圆弧" class="h-[22px] shrink-0"><svg class="size-[18px]" viewBox="0 0 18 18"><path d="M2.500 15C3 8 8 3 15 2.500" fill="none" stroke="#59616d" stroke-width="1.500"/><path d="M1.500 14.500h2v2h-2zM5.500 5.500h2v2h-2zM14.500 1.500h2v2h-2z" fill="#fff" stroke="#343b47"/></svg></button>
            <button aria-label="圆" class="h-[22px] shrink-0"><svg class="size-[18px]" viewBox="0 0 18 18"><circle cx="9" cy="9" r="7" fill="url(#paper)" stroke="#59616d"/><path d="M9 9l4-4" stroke="#343b47"/><path d="M8 8h2v2H8z" fill="#fff" stroke="#343b47"/></svg></button>
            <button aria-label="修订云线" class="h-[22px] shrink-0"><svg class="size-[18px]" viewBox="0 0 18 18"><path d="M4 9C0 7 2 1 6 2c1 0 2 1 2.500 1.500C11 0 17 2 15 7c-1 1-1 1-1 2 4 2 2 8-2 7-2 0-2-1-3-2-3 4-8 1-7-3 .5-1 1-1.500 2-2z" fill="url(#paper)" stroke="#59616d"/></svg></button>
            <button aria-label="样条曲线" class="h-[22px] shrink-0"><svg class="size-[18px]" viewBox="0 0 18 18"><path d="M2 16C3 9 5 5 8 8s7 5 8-6" fill="none" stroke="#59616d" stroke-width="1.500"/></svg></button>
            <button aria-label="椭圆" class="h-[22px] shrink-0"><svg class="size-[18px]" viewBox="0 0 18 18"><ellipse cx="9" cy="9" rx="7" ry="4.500" fill="url(#paper)" stroke="#59616d"/><path d="M1 8h2v2H1zM8 4h2v2H8zM15 8h2v2h-2z" fill="#fff" stroke="#343b47"/></svg></button>
            <button aria-label="椭圆弧" class="h-[22px] shrink-0"><svg class="size-[18px]" viewBox="0 0 18 18"><path d="M2 9c0-6 14-6 14 0 0 3-3 4-6 4" fill="none" stroke="#59616d"/><path d="M1 9h2v2H1zM8 12h2v2H8z" fill="#fff" stroke="#343b47"/></svg></button>
            <button aria-label="插入块" class="h-[22px] shrink-0"><svg class="size-[18px]" viewBox="0 0 18 18"><path d="M6.500 1.500h6l4 4v7h-10z" fill="url(#paper)" stroke="#59616d"/><path d="M2.500 7.500h8v5h-8z" fill="#fff" stroke="#343b47"/><circle cx="10" cy="13" r="3" fill="#eee" stroke="#59616d"/><path d="M1 11h2v2H1z" fill="#fff" stroke="#343b47"/><path d="M18 13v5h-5z" fill="#000"/></svg></button>
            <button aria-label="创建块" class="h-[22px] shrink-0"><svg class="size-[18px]" viewBox="0 0 18 18"><path d="M3.500 4.500h11v7h-11z" fill="url(#paper)" stroke="#343b47"/><circle cx="13" cy="12" r="3" fill="#eee" stroke="#59616d"/><path d="M1.500 10.500h2v2h-2z" fill="#fff" stroke="#343b47"/></svg></button>
            <button aria-label="点" class="h-[22px] shrink-0"><svg class="size-[18px]" viewBox="0 0 18 18"><path d="M7.500 8.500h2v2h-2z" fill="#fff" stroke="#343b47"/></svg></button>
            <button aria-label="图案填充" class="h-[22px] shrink-0"><svg class="size-[18px]" viewBox="0 0 18 18"><path d="M1 3.500h16M1 14.500h16M3.500 1v16M14.500 1v16M17 11l-6 6" stroke="#454d59"/><path d="M5 5l8 8M8 5l5 5M5 8l5 5M11 5l2 2M5 11l2 2" stroke="#59616d"/></svg></button>
            <button aria-label="渐变色" class="h-[22px] shrink-0"><svg class="size-[18px]" viewBox="0 0 18 18"><path d="M4 4h10v10H4z" fill="url(#shade)"/><path d="M1 3.500h16M1 14.500h16M3.500 1v16M14.500 1v16M17 11l-6 6" stroke="#454d59"/></svg></button>
            <button aria-label="面域" class="h-[22px] shrink-0"><svg class="size-[18px]" viewBox="0 0 18 18"><path d="M1.500 3.500h10l5 5v6h-15z" fill="url(#paper)" stroke="#59616d"/><circle cx="8.500" cy="9" r="3" fill="#fff" stroke="#343b47"/></svg></button>
            <button aria-label="表格" class="h-[22px] shrink-0"><svg class="size-[18px]" viewBox="0 0 18 18"><path d="M1.500 1.500h15v15h-15z" fill="#fff" stroke="#343b47"/><path d="M2 2h14v3H2z" fill="#a2aab7"/><path d="M2 5.500h14M2 9.500h14M2 13.500h14M6.500 5v11M11.500 5v11" stroke="#7f8792"/></svg></button>
            <button aria-label="多行文字" class="h-[22px] shrink-0 text-lg leading-[22px] font-medium text-[#2c323c] font-[Inter,sans-serif]">A</button>
            <button aria-label="添加选定对象" class="h-[22px] shrink-0"><svg class="size-[18px]" viewBox="0 0 18 18"><circle cx="5" cy="5" r="3.500" fill="#72b95c" stroke="#2e6a26"/><path d="M10 5h4v5M12 8l2 2 2-2" fill="none" stroke="#222"/></svg></button>
        </div>

        <!-- Drawing canvas -->
        <div class="relative flex-1 min-w-0 ml-[3px] mt-px border-l-2 border-t border-[#8b8b8b] bg-black overflow-hidden">
            <svg class="absolute inset-0 size-full" shape-rendering="crispEdges">
                <path d="M129.500 161v118" stroke="#0000c8"/>
                <path d="M494.500 161v118" stroke="#0000f0"/>
                <path d="M130 170.500h157M338 170.500h156" stroke="#0000f0"/>
                <path d="M135 170h6v-1h6v-1h6v-1h6v-1h6v10h-6v-1h-6v-1h-6v-1h-6v-1h-6zM489 170h-6v-1h-5v-1h-6v-1h-6v-1h-8v11h8v-1h6v-1h6v-1h5v-1h6z" fill="#00008b"/>
                <path d="M458 170.500h28" stroke="#8080e0"/>
                <path d="M317 170.500h21" stroke="#fff"/>
                <path d="M401.500 86v169" stroke="#fff"/>
                <path d="M401 170.500h2" stroke="#0000f0"/>
                <path d="M131 278.500h364" stroke="#fff" stroke-width="5"/>
                <path d="M129 277h4v3h-4zM493 277h4v3h-4z" fill="#fff"/>
                <path d="M494.500 274v4" stroke="#0000f0"/>
                <circle cx="489" cy="343" r="6" fill="#aaa" shape-rendering="auto"/>
                <circle cx="505" cy="344" r="6" fill="#aaa" shape-rendering="auto"/>
            </svg>
            <span class="absolute left-[292px] top-[154px] text-[40px] leading-10 font-thin text-[#f00] font-[Roboto,sans-serif]">20</span>

            <!-- Dynamic input prompt -->
            <div class="absolute left-[418px] top-[187px] flex items-start gap-1">
                <label for="dyn" class="flex items-center w-[132px] h-[23px] pl-[3px] pr-[3px] justify-between bg-[#999]">指定尺寸线位置或
                    <svg class="size-[11px] mt-[5px]" viewBox="0 0 11 11"><path d="M0 0h10v10H0z" fill="#e4e8ef"/><path d="M10.500 0v10.500H0" fill="none" stroke="#1111bb"/><path d="M3 4.500h4M5.500 2v4M3 7.500h5" stroke="#222"/></svg>
                </label>
                <input id="dyn" type="text" value="m" class="w-[49px] h-[22px] px-[3px] border border-[#333] bg-white">
            </div>
            <span class="absolute left-[570px] top-[190px] w-px h-[17px] bg-black"></span>

            <span class="absolute left-[412px] top-[352px] text-[38px] leading-10 font-bold text-[#b8b8b8] font-['Liberation_Sans',sans-serif]">B</span>
            <span class="absolute left-[414px] top-[390px] text-xl leading-6 text-[#c4c4c4]">jin</span>
            <div class="absolute right-0 bottom-0 w-[200px] h-[95px] flex items-center gap-[9px] pl-[11px] bg-[#233257] text-[#d2d3d5] font-[Inter,'Noto_Sans_CJK_SC',sans-serif]">
                <svg class="w-11 h-[60px] shrink-0" viewBox="0 0 44 60">
                    <path d="M3 8l4 1 5 4 5 2-2 2-4 1c-1 5 0 9 5 13 7 1 14 0 18 2 4 2 4 5 2 9l2 6-2 10h-4l1-10-5-6c-5 2-9 2-14 0l-3 7-1 10H6l2-10-1-9C1 35-1 29 2 24c2-3 5-4 5-7z" fill="currentColor"/>
                    <path d="M12 12c9-2 16 3 21-1l10-8M15 12c-4-3-3-6-1-9M18 11c-1-4 1-6 2-9M23 11c-1-4 2-6 2-10M28 12c4 1 7-1 9-4M28 11c0-2 1-4 3-6" fill="none" stroke="currentColor" stroke-width="1.500"/>
                </svg>
                <div class="whitespace-nowrap">
                    <div class="flex items-center h-9 text-[28px] leading-9"><span class="text-[32px]">3D</span><span class="font-medium">溜溜网</span></div>
                    <div class="text-2xl leading-6">3D66.COM</div>
                </div>
            </div>
        </div>
    </main>
</body>
</html>
